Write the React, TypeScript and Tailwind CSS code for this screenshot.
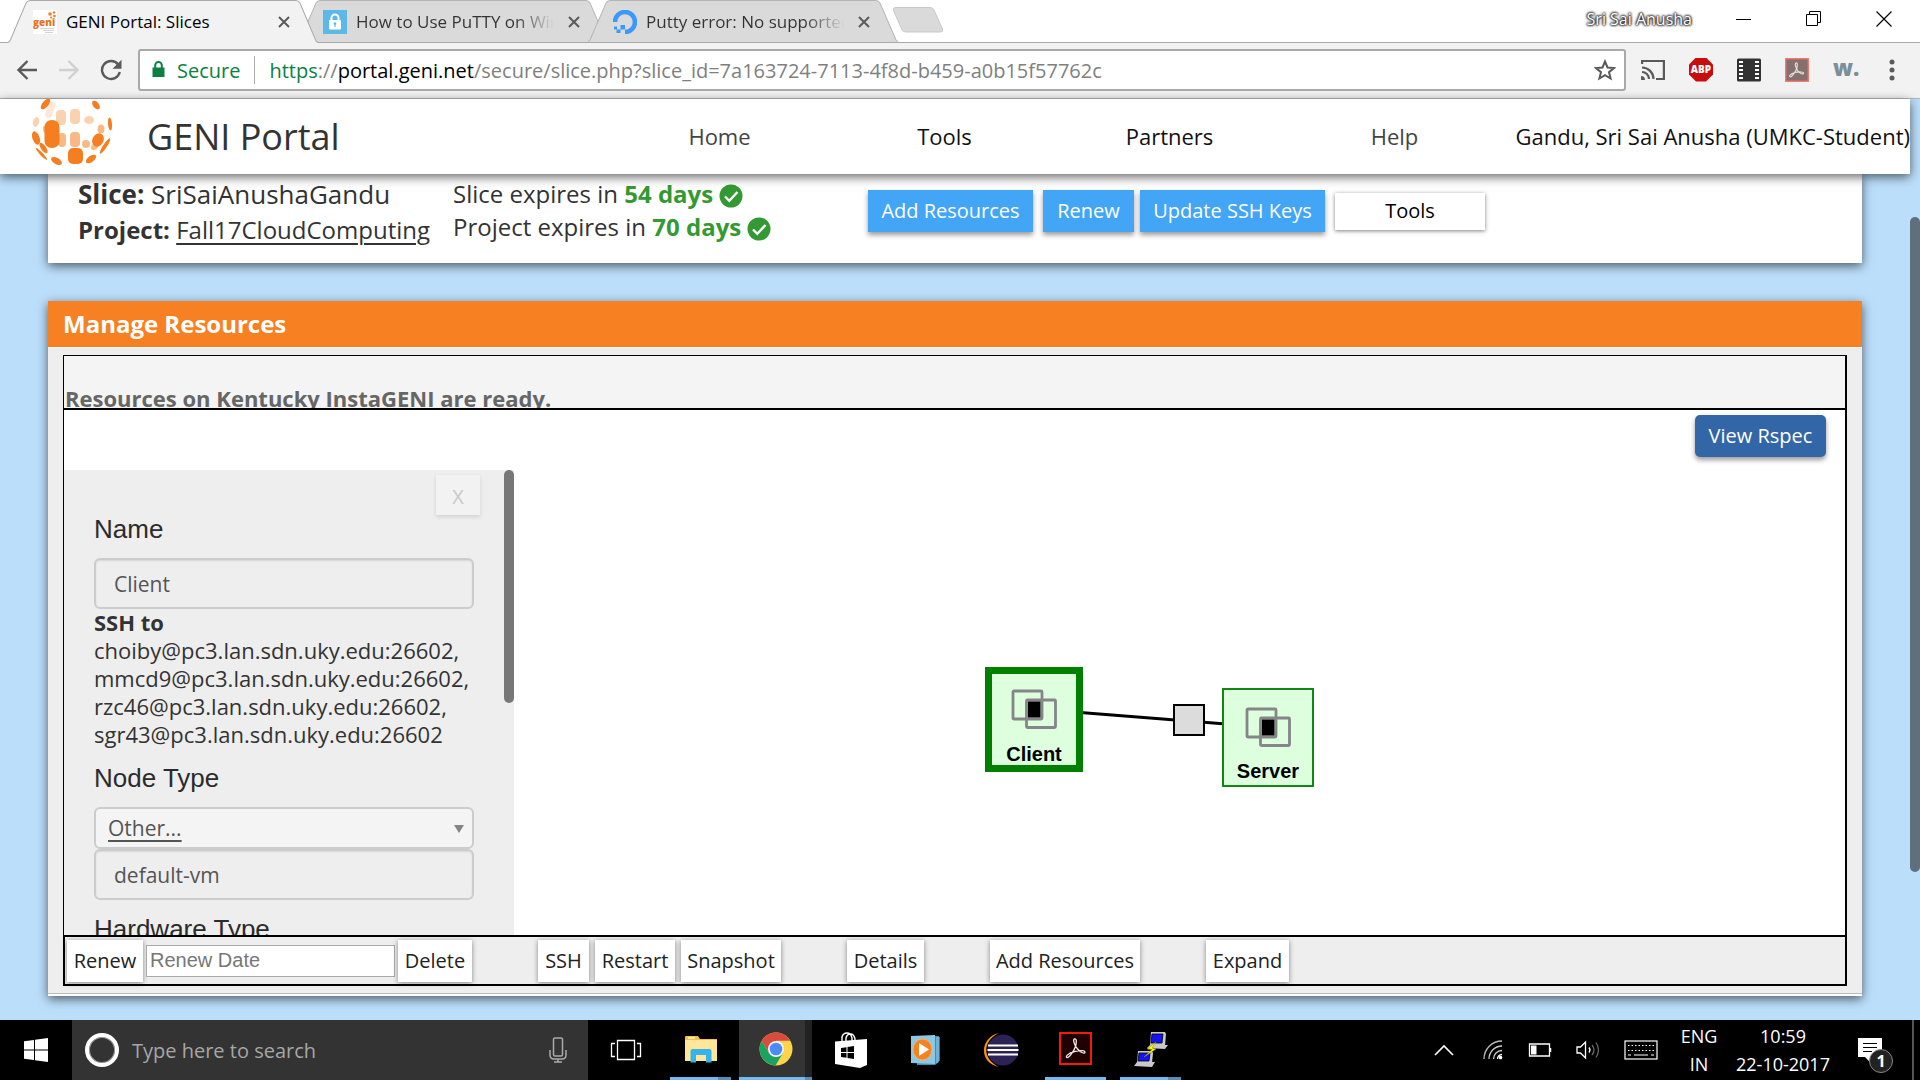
import React from "react";

const SANS = "font-['Open_Sans','Noto_Sans',sans-serif]";
const ARIAL = "font-['Liberation_Sans',Arial,sans-serif]";

/* ---------- browser chrome ---------- */

function GeniFavicon() {
  return (
    <svg viewBox="0 0 24 24" className="h-6 w-6" aria-hidden="true">
      <path fill="#fff" d="M0 0h24v24H0z" />
      <g fill="#f47b20">
        <circle cx="17" cy="4" r="1.8" />
        <circle cx="21" cy="2.5" r="1.2" />
        <circle cx="21.5" cy="6" r="1.3" />
        <circle cx="18" cy="7.5" r="1.1" />
      </g>
      <text x="0" y="15.5" fontSize="10" fontWeight="800" fill="#e8731c" fontFamily="Open Sans">
        geni
      </text>
      <path d="M7 18.5h14M10 20.5h11M12 22.5h8" stroke="#c9c9c9" strokeWidth="0.8" />
    </svg>
  );
}

function LockFavicon() {
  return (
    <svg viewBox="0 0 24 24" className="h-6 w-6" aria-hidden="true">
      <path fill="#5cb8e6" d="M0 0h24v24H0z" />
      <rect x="6" y="10" width="12" height="9.5" rx="1" fill="#fff" />
      <path d="M8.5 10V8a3.5 3.5 0 0 1 7 0v2" stroke="#fff" strokeWidth="2" fill="none" />
      <circle cx="12" cy="13.5" r="1.3" fill="#5cb8e6" />
      <path d="M11.4 14h1.2v3h-1.2z" fill="#5cb8e6" />
    </svg>
  );
}

function OceanFavicon() {
  return (
    <svg viewBox="0 0 24 24" className="h-6 w-6" aria-hidden="true">
      <path d="M2 12A10 10 0 1 1 12 22" stroke="#3b99fc" strokeWidth="4.6" fill="none" />
      <path fill="#3b99fc" d="M7.5 15H12v4.600H7.500zM3.500 19.500h4V23h-4zM1 16.500h3v3H1z" />
    </svg>
  );
}

function Tab({ title, icon, active }: { title: string; icon: React.ReactNode; active?: boolean }) {
  return (
    <div className={active ? "relative z-10 -mr-5 h-[43px] w-[310px]" : "relative -mr-5 h-[42px] w-[310px]"}>
      <svg viewBox="0 0 309 43" preserveAspectRatio="none" className="absolute inset-0 h-full w-full" aria-hidden="true">
        <path
          d="M0 43 L2 41 L18 3 Q19.500 0.500 22 0.500 H287 Q289.500 0.500 291 3 L307 41 L309 43 Z"
          fill={active ? "#f2f2f2" : "#dadada"}
        />
        <path
          d="M0 42.500 L2 41 L18 3 Q19.500 0.500 22 0.500 H287 Q289.500 0.500 291 3 L307 41 L309 42.500"
          fill="none"
          stroke={active ? "#a9a9a9" : "#b4b4b4"}
        />
      </svg>
      <div className="relative flex h-11 items-center pr-6 pl-[25px]">
        {icon}
        <button
          type="button"
          className={
            active
              ? "ml-[9px] w-[198px] overflow-hidden text-left text-[17px] whitespace-nowrap text-black"
              : "ml-[9px] w-[198px] overflow-hidden bg-linear-to-r from-[#333] from-80% to-transparent bg-clip-text text-left text-[17px] whitespace-nowrap text-transparent"
          }
        >
          {title}
        </button>
        <button type="button" aria-label={"Close " + title} className="ml-3.5">
          <svg viewBox="0 0 12 12" className="h-3 w-3" aria-hidden="true">
            <path d="M1 1l10 10M11 1L1 11" stroke="#5a5a5a" strokeWidth="2" />
          </svg>
        </button>
      </div>
    </div>
  );
}

function TabStrip() {
  return (
    <div className="relative z-10 flex h-[43px] border-b border-[#a9a9a9] bg-white pl-2">
      <Tab title="GENI Portal: Slices" icon={<GeniFavicon />} active />
      <Tab title="How to Use PuTTY on Windows" icon={<LockFavicon />} />
      <Tab title="Putty error: No supported authentication" icon={<OceanFavicon />} />
      <button type="button" aria-label="New tab" className="ml-3.5 pb-1">
        <svg viewBox="0 0 52 28" className="h-7 w-[52px]" aria-hidden="true">
          <path d="M4 2.500H38Q41 2.500 42 5L50.500 24Q51.500 27 48.500 27H14Q11 27 10 25L1.500 5.500Q0.500 2.500 4 2.500Z" fill="#dadada" stroke="#c9c9c9" />
        </svg>
      </button>
      <div className="ml-auto flex items-center pr-7 pb-1">
        <span className="mr-11 text-[16px] text-white [text-shadow:0_0_2px_#222,0_0_2px_#222,0_0_3px_#222,0_0_3px_#333]">Sri Sai Anusha</span>
        <button type="button" aria-label="Minimize" className="mr-[54px]">
          <svg viewBox="0 0 16 16" className="h-4 w-4" aria-hidden="true"><path d="M0 8.500h15" stroke="#000" /></svg>
        </button>
        <button type="button" aria-label="Restore" className="mr-[54px]">
          <svg viewBox="0 0 16 16" className="h-4 w-4" fill="none" stroke="#000" aria-hidden="true">
            <path d="M0.500 3.500h11v11h-11zM3.500 3.500v-3h11v11h-3" />
          </svg>
        </button>
        <button type="button" aria-label="Close window">
          <svg viewBox="0 0 16 16" className="h-4 w-4" aria-hidden="true"><path d="M0.500 0.500l15 15M15.500 0.500l-15 15" stroke="#000" strokeWidth="1.2" /></svg>
        </button>
      </div>
    </div>
  );
}

function Toolbar() {
  return (
    <div className="flex h-14 items-center border-b border-[#b5b5b5] bg-[#f2f2f2] pb-0.5 pl-4">
      <button type="button" aria-label="Back">
        <svg viewBox="0 0 22 22" className="h-[22px] w-[22px]" fill="none" stroke="#5a5a5a" strokeWidth="2.4" aria-hidden="true">
          <path d="M21 11H3M11.500 2L2.500 11l9 9" />
        </svg>
      </button>
      <button type="button" aria-label="Forward" className="ml-5">
        <svg viewBox="0 0 22 22" className="h-[22px] w-[22px]" fill="none" stroke="#d0d0d0" strokeWidth="2.4" aria-hidden="true">
          <path d="M1 11h18M10.500 2l9 9-9 9" />
        </svg>
      </button>
      <button type="button" aria-label="Reload" className="ml-5">
        <svg viewBox="0 0 22 22" className="h-[22px] w-[22px]" aria-hidden="true">
          <path d="M18.200 5.500A9 9 0 1 0 19.800 13" fill="none" stroke="#5a5a5a" strokeWidth="2.4" />
          <path d="M21.500 0.800v9h-9z" fill="#5a5a5a" />
        </svg>
      </button>
      <div className="ml-4 flex h-[42px] flex-1 items-center rounded-[3px] border-2 border-[#a9a9a9] bg-white pr-2 pl-3 text-[20px]">
        <svg viewBox="0 0 13 17" className="h-[17px] w-[13px]" aria-hidden="true">
          <path d="M0.500 6.500h12V16h-12z" fill="#0b8043" />
          <path d="M3.200 7V4.300a3.300 3.300 0 0 1 6.600 0V7" fill="none" stroke="#0b8043" strokeWidth="2" />
        </svg>
        <span className="ml-3 pt-0.5 text-[#0b8043]">Secure</span>
        <span className="mx-3.5 h-7 w-px bg-[#aaa]" />
        <span className="flex-1 pt-0.5 whitespace-nowrap text-[#808080]">
          <span className="text-[#0b8043]">https</span>://<span className="text-black">portal.geni.net</span>
          /secure/slice.php?slice_id=7a163724-7113-4f8d-b459-a0b15f57762c
        </span>
        <button type="button" aria-label="Bookmark this page">
          <svg viewBox="0 0 22 22" className="h-[22px] w-[22px]" fill="none" stroke="#5a5a5a" strokeWidth="2" aria-hidden="true">
            <path d="M11 2.500l2.500 6 6.500.5-5 4.200 1.600 6.300L11 16.100 5.400 19.500 7 13.200 2 9l6.500-.5z" />
          </svg>
        </button>
      </div>
      <div className="flex items-center gap-6 pr-[21px] pl-[15px]">
        <svg viewBox="0 0 24 24" className="h-6 w-6" fill="none" stroke="#5a5a5a" strokeWidth="2.2" aria-hidden="true">
          <path d="M1.100 6V3h21.800v18H15M1 9.500A11.500 11.500 0 0 1 12.500 21M1 14a7 7 0 0 1 7 7" />
          <path d="M0 18a4 4 0 0 1 4 4H0z" fill="#5a5a5a" stroke="none" />
        </svg>
        <span className="flex h-6 w-6 items-center justify-center bg-[#c70d0d] text-[10px] font-extrabold text-white [clip-path:polygon(29%_0,71%_0,100%_29%,100%_71%,71%_100%,29%_100%,0_71%,0_29%)]">
          ABP
        </span>
        <svg viewBox="0 0 24 24" className="h-6 w-6" aria-hidden="true">
          <rect y="0.5" width="24" height="23" rx="1.5" fill="#333" />
          <g fill="#fff">
            <path d="M2 3h4v2H2zM2 7h4v2H2zM2 11h4v2H2zM2 15h4v2H2zM2 19h4v2H2zM18 3h4v2h-4zM18 7h4v2h-4zM18 11h4v2h-4zM18 15h4v2h-4zM18 19h4v2h-4z" />
          </g>
        </svg>
        <svg viewBox="0 0 24 24" className="h-6 w-6" aria-hidden="true">
          <rect x="0.7" y="0.7" width="22.6" height="22.6" fill="#85706d" stroke="#f4796b" strokeWidth="1.4" />
          <path d="M11 5c1.800-.5 1.500 3 .8 5.200C10.700 13.500 7 19 5.300 18.800s.2-3.300 4.700-4.300 8.600-.6 8.600.8-3.800.5-5.700-2.300S9.200 5.500 11 5z" fill="none" stroke="#e4dcdb" strokeWidth="1.2" />
        </svg>
        <span className="w-6 pb-1.5 text-[22px] leading-6 font-extrabold text-[#7c8f99]">w.</span>
        <button type="button" aria-label="Menu" className="px-1">
          <svg viewBox="0 0 6 22" className="ml-1 h-[22px] w-1.5" fill="#5a5a5a" aria-hidden="true">
            <circle cx="3" cy="3" r="2.5" />
            <circle cx="3" cy="11" r="2.5" />
            <circle cx="3" cy="19" r="2.5" />
          </svg>
        </button>
      </div>
    </div>
  );
}

/* ---------- portal page ---------- */

function GeniGlobe() {
  return (
    <svg viewBox="0 0 84 68" className="h-[68px] w-[84px]" fill="#f57f20" aria-hidden="true">
      <ellipse cx="13.5" cy="5" rx="3" ry="6.5" transform="rotate(40 13.5 5)" />
      <ellipse cx="64" cy="6" rx="3" ry="5" transform="rotate(-38 64 6)" />
      <g opacity="0.35">
        <rect x="15" y="2" width="7" height="17" rx="3.5" transform="rotate(20 18 10)" opacity="0.5" />
        <rect x="24" y="11" width="10" height="15" rx="4" />
        <rect x="38" y="10" width="10" height="15" rx="4" />
        <ellipse cx="57" cy="21" rx="5" ry="4" />
        <ellipse cx="4" cy="23" rx="3" ry="5" transform="rotate(15 4 23)" />
      </g>
      <g opacity="0.55">
        <rect x="38" y="33" width="10" height="15" rx="4" />
        <rect x="26" y="34" width="8" height="14" rx="4" />
        <ellipse cx="69" cy="30" rx="3.5" ry="4.5" />
        <ellipse cx="54" cy="45" rx="4" ry="4" />
        <ellipse cx="14" cy="30" rx="3" ry="4" />
        <ellipse cx="63" cy="47" rx="3" ry="5" transform="rotate(40 63 47)" />
      </g>
      <rect x="12.5" y="21" width="15" height="28" rx="7" />
      <rect x="36" y="49" width="15" height="16" rx="5" />
      <ellipse cx="66" cy="41" rx="5.5" ry="7" transform="rotate(30 66 41)" />
      <ellipse cx="78" cy="25" rx="2" ry="6.5" transform="rotate(-5 78 25)" />
      <ellipse cx="4" cy="39" rx="3.5" ry="7" transform="rotate(-20 4 39)" />
      <ellipse cx="11.5" cy="49" rx="2.5" ry="6" transform="rotate(-35 11.5 49)" />
      <ellipse cx="9.5" cy="55" rx="1.5" ry="8" transform="rotate(-43 9.5 55)" />
      <ellipse cx="24.5" cy="62" rx="6" ry="3.2" transform="rotate(30 24.5 62)" />
      <ellipse cx="59" cy="60" rx="6" ry="3" transform="rotate(-36 59 60)" />
      <ellipse cx="73" cy="47" rx="2" ry="9" transform="rotate(33 73 47)" />
    </svg>
  );
}

function PortalHeader() {
  return (
    <header className="relative z-10 mr-[10px] flex h-[75px] items-center bg-white shadow-[0_3px_10px_rgba(0,0,0,0.6)]">
      <div className="flex flex-1 items-start self-start pl-8">
        <GeniGlobe />
        <h1 className="ml-[31px] pt-1 text-[36px] leading-[68px] text-[#333]">GENI Portal</h1>
      </div>
      <nav className="grid grid-cols-[225px_225px_225px_225px] text-center text-[22px] text-[#111]">
        <a href="#home" className="text-[#444]">Home</a>
        <a href="#tools">Tools</a>
        <a href="#partners">Partners</a>
        <a href="#help" className="text-[#444]">Help</a>
      </nav>
      <a href="#user" className="w-[403px] text-right text-[22px] whitespace-nowrap text-[#111]">Gandu, Sri Sai Anusha (UMKC-Student)</a>
    </header>
  );
}

function Check() {
  return (
    <svg viewBox="0 0 24 24" className="ml-1.5 inline-block h-6 w-6 align-[-5px]" aria-hidden="true">
      <circle cx="12" cy="12" r="11.5" fill="#339933" />
      <path d="M6 12.500l4.300 4.300L18.500 8" fill="none" stroke="#fff" strokeWidth="2.4" />
    </svg>
  );
}

function SliceCard() {
  const blue = "h-[42px] bg-[#42a5f5] text-center text-[20px] whitespace-nowrap text-white shadow-[0_3px_5px_rgba(0,0,0,0.4)]";
  return (
    <section className="mr-[58px] ml-12 flex h-[89px] items-start bg-white pl-[30px] text-[#333] shadow-[0_3px_10px_rgba(0,0,0,0.6)]">
      <div className="w-[375px] pt-[3px] leading-[35px] whitespace-nowrap">
        <p className="text-[26px]"><b>Slice:</b> SriSaiAnushaGandu</p>
        <p className="text-[24px]"><b>Project:</b> <a href="#project" className="underline decoration-2 underline-offset-4">Fall17CloudComputing</a></p>
      </div>
      <div className="w-[415px] pt-[3px] text-[24px] leading-[33px] whitespace-nowrap">
        <p>Slice expires in <b className="text-[#339933]">54 days</b><Check /></p>
        <p>Project expires in <b className="text-[#339933]">70 days</b><Check /></p>
      </div>
      <div className="flex items-center pt-4">
        <button type="button" className={blue + " w-[165px]"}>Add Resources</button>
        <button type="button" className={blue + " ml-2.5 w-[91px]"}>Renew</button>
        <button type="button" className={blue + " ml-1.5 w-[185px]"}>Update SSH Keys</button>
        <button type="button" className="ml-2.5 h-[37px] w-[150px] bg-white text-[20px] text-black shadow-[0_1px_4px_rgba(0,0,0,0.5)]">Tools</button>
      </div>
    </section>
  );
}

function NodeGlyph() {
  return (
    <svg viewBox="0 0 46 40" className="h-10 w-[46px]" aria-hidden="true">
      <g fill="none" stroke="#85858a" strokeWidth="2.8">
        <rect x="2" y="2" width="29" height="28" rx="1" />
        <rect x="15.5" y="11" width="29" height="27.5" rx="1" />
      </g>
      <path d="M17 12.500h12.500v16H17z" fill="#000" />
    </svg>
  );
}

function Topology() {
  return (
    <div className={"relative flex-1 text-[20px] leading-5 font-bold text-black " + ARIAL}>
      <svg className="absolute top-[301px] left-[560px] h-4 w-[152px]" viewBox="0 0 152 16" aria-hidden="true">
        <path d="M0 1L152 13" stroke="#000" strokeWidth="3" />
      </svg>
      <div className="absolute top-[294px] left-[659px] h-8 w-8 border-2 border-black bg-[#dcdcdc]" />
      <div className="absolute top-[257px] left-[471px] flex h-[105px] w-[98px] flex-col items-center border-[7px] border-[#008000] bg-[#ddffdd] pt-[15px]">
        <NodeGlyph />
        <span className="mt-[15px]">Client</span>
      </div>
      <div className="absolute top-[278px] left-[708px] flex h-[99px] w-[92px] flex-col items-center border-2 border-[#118811] bg-[#ddffdd] pt-[17px]">
        <NodeGlyph />
        <span className="mt-3.5">Server</span>
      </div>
    </div>
  );
}

function NodePanel() {
  const field =
    "h-[51px] w-full rounded-md border-2 border-[#ccc] bg-[#eee] px-[18px] text-[21px] text-[#555] shadow-[inset_0_1px_2px_rgba(0,0,0,0.1)]";
  const label = "block text-[26px] leading-7 text-[#2b2b2b] " + ARIAL;
  return (
    <aside className="mt-[60px] flex w-[450px] bg-[#eee]">
      <div className="flex-1 overflow-hidden pr-[30px] pl-[30px]">
        <div className="-mr-1.5 flex h-[45px] justify-end pt-[5px]">
          <button type="button" aria-label="Close panel" className="h-10 w-11 bg-[#f2f2f2] pt-1 text-[20px] leading-9 text-[#c8c8c8] shadow-[0_2px_4px_rgba(0,0,0,0.12)]">
            X
          </button>
        </div>
        <label htmlFor="node-name" className={label}>Name</label>
        <input id="node-name" defaultValue="Client" className={field + " mt-[15px]"} />
        <div className="-mt-px text-[22px] leading-7 whitespace-nowrap text-[#333]">
          <b className="block">SSH to</b>
          choiby@pc3.lan.sdn.uky.edu:26602,<br />
          mmcd9@pc3.lan.sdn.uky.edu:26602,<br />
          rzc46@pc3.lan.sdn.uky.edu:26602,<br />
          sgr43@pc3.lan.sdn.uky.edu:26602
        </div>
        <label htmlFor="node-type" className={label + " mt-4"}>Node Type</label>
        <div className="relative mt-[15px]">
          <select id="node-type" className="h-[42px] w-full appearance-none rounded-md border-2 border-[#ccc] bg-[#f4f4f4] pt-0.5 pl-3 text-[21px] text-[#555] underline decoration-2 underline-offset-4">
            <option>Other...</option>
          </select>
          <svg viewBox="0 0 10 8" className="pointer-events-none absolute top-[18px] right-[10px] h-2 w-2.5" aria-hidden="true">
            <path d="M0 0h10L5 8z" fill="#858585" />
          </svg>
        </div>
        <input aria-label="Node type name" defaultValue="default-vm" className={field} />
        <p className={label + " mt-[15px] h-5"}>Hardware Type</p>
      </div>
      <div className="h-[233px] w-2.5 rounded-full bg-[#777]" />
    </aside>
  );
}

function FooterButton({ children, className }: { children: string; className: string }) {
  return (
    <button type="button" className={"h-[42px] bg-white text-[20px] whitespace-nowrap text-[#222] shadow-[0_1px_5px_rgba(0,0,0,0.45)] " + className}>
      {children}
    </button>
  );
}

function ManageResources() {
  return (
    <section className="mt-[38px] mr-[58px] ml-12 border-b-2 border-white bg-[#eee] shadow-[0_3px_10px_rgba(0,0,0,0.6)]">
      <h2 className="h-[47px] border-b border-white bg-[#f78022] pl-[15px] text-[24px] leading-[46px] font-bold text-white">Manage Resources</h2>
      <div className="mx-[15px] my-[7px] border border-r-2 border-b-2 border-black">
        <div className="h-[52px] overflow-hidden bg-[#f4f4f4] pt-7 pl-px text-[22px] leading-7 font-bold text-[#666]">
          Resources on Kentucky InstaGENI are ready.
        </div>
        <div className="relative flex h-[529px] border-y-2 border-black bg-white">
          <NodePanel />
          <Topology />
          <button type="button" className="absolute top-[5px] right-[19px] h-[42px] w-[131px] rounded-[5px] bg-[#3366a6] text-[20px] text-white shadow-[0_3px_5px_rgba(0,0,0,0.4)]">
            View Rspec
          </button>
        </div>
        <div className="flex h-[47px] items-center border-l border-black pl-0.5">
          <FooterButton className="w-[76px]">Renew</FooterButton>
          <input
            aria-label="Renew Date"
            placeholder="Renew Date"
            className={"mx-[3px] h-8 w-[249px] border border-[#a9a9a9] bg-white px-[3px] text-[20px] placeholder:text-[#777] " + ARIAL}
          />
          <FooterButton className="w-[74px]">Delete</FooterButton>
          <FooterButton className="ml-[66px] w-[51px]">SSH</FooterButton>
          <FooterButton className="ml-1.5 w-[80px]">Restart</FooterButton>
          <FooterButton className="ml-1.5 w-[100px]">Snapshot</FooterButton>
          <FooterButton className="ml-[66px] w-[77px]">Details</FooterButton>
          <FooterButton className="ml-[66px] w-[150px]">Add Resources</FooterButton>
          <FooterButton className="ml-[66px] w-[83px]">Expand</FooterButton>
        </div>
      </div>
      <div className="h-px bg-[#bbb]" />
    </section>
  );
}

/* ---------- Windows taskbar ---------- */

function AcrobatIcon() {
  return (
    <svg viewBox="0 0 33 33" className="h-[33px] w-[33px]" aria-hidden="true">
      <rect x="1" y="1" width="31" height="31" fill="#200000" stroke="#ee1c0c" strokeWidth="2" />
      <path d="M15.500 7c2.500-.5 2 4 1 7.500C15 19 10 26 8 25.500s1-4.500 7.500-6 10.500-1 10.500.8-4.500.5-7.500-3.300S13.500 7.500 15.500 7z" fill="none" stroke="#f4e9e9" strokeWidth="1.3" />
    </svg>
  );
}

const apps: { name: string; icon: React.ReactNode; mark?: "single" | "stack" | "active" }[] = [
  {
    name: "Task view",
    icon: (
      <svg viewBox="0 0 32 22" className="h-[22px] w-8" fill="none" stroke="#fff" strokeWidth="1.3" aria-hidden="true">
        <path d="M7.500 1.500h17v19h-17zM5 4.500H1.500v13H5M27 4.500h3.500v13H27" />
      </svg>
    ),
  },
  {
    name: "File Explorer",
    mark: "stack",
    icon: (
      <svg viewBox="0 0 32 28" className="h-7 w-8" aria-hidden="true">
        <path d="M0 2q0-1 1-1h12l2 3h17v22H0z" fill="#f5c342" />
        <path d="M0 5h32v21H0z" fill="#ffe699" />
        <path d="M3 3h7" stroke="#fff" strokeWidth="1.2" />
        <path d="M5.500 27.500V16q0-2 2-2h17q2 0 2 2v11.500h-5.500V20h-10v7.500z" fill="#36b3ec" />
      </svg>
    ),
  },
  {
    name: "Google Chrome",
    mark: "active",
    icon: (
      <svg viewBox="0 0 34 34" className="h-[34px] w-[34px]" aria-hidden="true">
        <circle cx="17" cy="17" r="16.5" fill="#fdd54d" />
        <path d="M2.700 8.800A16.500 16.500 0 0 1 31.300 8.800H17L10 21z" fill="#db4a3f" />
        <path d="M2.700 8.800A16.500 16.500 0 0 0 16.500 33.500L24 21 17 24 10 21z" fill="#1ba261" />
        <circle cx="17" cy="17" r="8" fill="#f4f4f4" />
        <circle cx="17" cy="17" r="6.3" fill="#4c8bf5" />
      </svg>
    ),
  },
  {
    name: "Store",
    icon: (
      <svg viewBox="0 0 32 36" className="h-9 w-8" aria-hidden="true">
        <path d="M7 9V5q1-4 5-4t5 5v3M11 9V6q1-4 4.500-4T20 7v2" fill="none" stroke="#fff" strokeWidth="1.4" />
        <path d="M0 9.500L32 7v26l-7 3L0 32z" fill="#fff" />
        <path d="M6 16l5.500-.7V20H6zM12.500 15.100L19 14v6h-6.500zM6 21h5.500v4.700L6 25zM12.500 21H19v6l-6.500-1.100z" fill="#000" />
      </svg>
    ),
  },
  {
    name: "Media Player",
    icon: (
      <svg viewBox="0 0 30 32" className="h-8 w-[30px]" aria-hidden="true">
        <path d="M6 2h22v26l-4 3H6z" fill="#3c8fb8" />
        <path d="M0 2l24-1v29L0 29z" fill="#8cc8e4" />
        <path d="M26 3v26M28 3v24" stroke="#9bd5ee" />
        <ellipse cx="11.5" cy="15.5" rx="9.5" ry="10.5" fill="#f58220" stroke="#fbb169" />
        <path d="M8 9l10 6.500L8 22z" fill="#fff" />
      </svg>
    ),
  },
  {
    name: "Eclipse",
    icon: (
      <svg viewBox="0 0 36 36" className="h-9 w-9" aria-hidden="true">
        <path d="M16 1C-3 5-5 31 16 35-1 27-1 9 16 1z" fill="#f7941e" />
        <circle cx="20" cy="18" r="15.5" fill="#2c2255" />
        <path d="M5 13.500h30M4.500 18h31M5 22.500h30" stroke="#fff" strokeWidth="2" />
      </svg>
    ),
  },
  { name: "Acrobat Reader", mark: "single", icon: <AcrobatIcon /> },
  {
    name: "PuTTY",
    mark: "stack",
    icon: (
      <svg viewBox="0 0 34 36" className="h-9 w-[34px]" aria-hidden="true">
        <path d="M17 1h14l1 2-1 12H16zM13 17l3-3h18l-3 4z" fill="#c9c9c9" />
        <path d="M18 3h11l-1 9H17z" fill="#1414f0" stroke="#000" strokeWidth="0.8" />
        <path d="M4 20h14l1 2-1 10H3zM0 35l3-4h18l-3 5z" fill="#c9c9c9" />
        <path d="M5 22h11l-1 8H4z" fill="#1414f0" stroke="#000" strokeWidth="0.8" />
        <path d="M22 11l-9 7 5 .5-8 7.500 12-8-4-1z" fill="#ff0" stroke="#8a8a00" strokeWidth="0.5" />
      </svg>
    ),
  },
];

function Taskbar() {
  return (
    <footer className={"flex h-[60px] bg-black text-white " + SANS}>
      <button type="button" aria-label="Start" className="flex w-[72px] items-center justify-center">
        <svg viewBox="0 0 24 24" className="h-6 w-6" fill="#fff" aria-hidden="true">
          <path d="M0 3.300L10 2v9.500H0zM11 1.800L24 0v11.500H11zM0 12.500h10V22L0 20.700zM11 12.500h13V24l-13-1.800z" />
        </svg>
      </button>
      <div className="flex w-[516px] items-center bg-[#333] px-[13px]">
        <span className="h-[34px] w-[34px] rounded-full border-4 border-white ring-1 ring-[#999] ring-inset" />
        <input aria-label="Search" placeholder="Type here to search" className="ml-[13px] min-w-0 flex-1 bg-transparent pt-0.5 text-[20px] placeholder:text-[#a6a6a6]" />
        <svg viewBox="0 0 18 26" className="mr-2 h-[26px] w-[18px]" fill="none" stroke="#aaa" strokeWidth="1.5" aria-hidden="true">
          <rect x="4.5" y="1" width="9" height="18" rx="1.5" />
          <path d="M1 13v5q0 4 4 4h8q4 0 4-4v-5M9 22v3M5 25h8" />
        </svg>
      </div>
      <div className="flex">
        {apps.map((a) => (
          <button key={a.name} type="button" aria-label={a.name} className="flex w-[75px] flex-col items-center">
            <span
              className={
                a.mark === "active"
                  ? "flex w-[73px] flex-1 items-center justify-center border-r-[7px] border-[#222] bg-[#343434] pl-[7px]"
                  : "flex flex-1 items-center justify-center"
              }
            >
              {a.icon}
            </span>
            {a.mark === "single" && <span className="h-[3px] w-[61px] bg-[#76b9ed]" />}
            {a.mark === "stack" && <span className="h-[3px] w-[61px] border-r-[13px] border-[#5a8cb4] bg-[#76b9ed]" />}
            {a.mark === "active" && <span className="h-[3px] w-[73px] border-r-[7px] border-[#5a8cb4] bg-[#76b9ed]" />}
          </button>
        ))}
      </div>
      <div className="ml-auto flex items-center">
        <svg viewBox="0 0 20 12" className="h-3 w-5" fill="none" stroke="#fff" strokeWidth="1.6" aria-hidden="true">
          <path d="M1 11l9-9 9 9" />
        </svg>
        <svg viewBox="0 0 20 20" className="ml-[29px] h-5 w-5" fill="none" strokeWidth="1.3" stroke="#fff" aria-hidden="true">
          <path d="M1 19A18 18 0 0 1 19 1" stroke="#bbb" />
          <path d="M6 19A13 13 0 0 1 19 6M10.500 19a8.500 8.500 0 0 1 8.500-8.500" stroke="#ccc" />
          <path d="M14.500 19a4.500 4.500 0 0 1 4.500-4.500" />
          <circle cx="17.5" cy="17.5" r="1.2" fill="#fff" />
        </svg>
        <svg viewBox="0 0 24 14" className="ml-[25px] h-3.5 w-6" fill="none" stroke="#fff" aria-hidden="true">
          <path d="M1.500 1h20v12h-20z" strokeWidth="1.3" />
          <path d="M22.500 5v4" strokeWidth="1.5" />
          <path d="M3 2.500h5.500v9H3z" fill="#fff" stroke="none" />
        </svg>
        <svg viewBox="0 0 24 20" className="ml-6 h-5 w-6" fill="none" stroke="#fff" strokeWidth="1.3" aria-hidden="true">
          <path d="M1 7h3.500L9.500 2v16l-5-5H1z" />
          <path d="M13 7.500q2 2.500 0 5" />
          <path d="M16 5q4 5 0 10M20 2.500q5 7.500 0 15" stroke="#666" />
        </svg>
        <svg viewBox="0 0 34 20" className="ml-6 h-5 w-[34px]" fill="none" stroke="#fff" strokeWidth="1.2" aria-hidden="true">
          <rect x="1" y="1" width="32" height="18" />
          <path d="M4 5.500h27M4 10.500h27" strokeDasharray="1.500 2" />
          <path d="M4 15h3M10 15h14M27 15h3" />
        </svg>
        <div className="ml-4 w-[50px] text-center text-[18px] leading-7">
          <div>ENG</div>
          <div>IN</div>
        </div>
        <div className="ml-2.5 w-[98px] text-center text-[18px] leading-7 whitespace-nowrap">
          <div>10:59</div>
          <div>22-10-2017</div>
        </div>
        <button type="button" aria-label="1 new notification" className="relative ml-[26px] h-[38px] w-9">
          <svg viewBox="0 0 24 24" className="absolute top-[7px] left-0 h-6 w-6" aria-hidden="true">
            <path d="M0 0h24v19H12v5l-5-5H0z" fill="#fff" />
            <path d="M5 5.500h14M5 9.500h14M5 13.500h9" stroke="#000" strokeWidth="1.2" />
          </svg>
          <span className="absolute top-[18px] left-[11px] h-6 w-6 rounded-full border border-[#888] bg-[#222] text-center text-[16px] leading-[22px] font-bold">1</span>
        </button>
        <span className="ml-[18px] h-[60px] w-2 border-l-2 border-[#555]" />
      </div>
    </footer>
  );
}

export default function App() {
  return (
    <div className={"flex min-h-screen flex-col bg-[#bbdefb] " + SANS}>
      <TabStrip />
      <Toolbar />
      <main className="relative flex-1">
        <PortalHeader />
        <SliceCard />
        <ManageResources />
        <div className="absolute top-[118px] right-0 h-[655px] w-2.5 rounded-full bg-[#5f6f7d]" />
      </main>
      <Taskbar />
    </div>
  );
}
